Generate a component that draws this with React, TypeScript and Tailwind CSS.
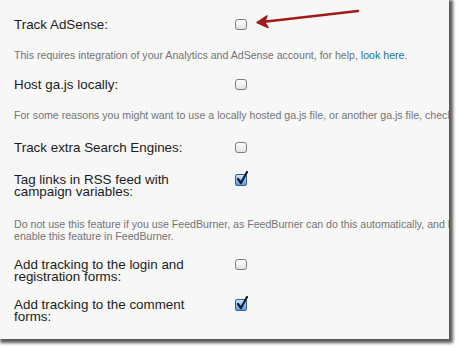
import React from "react";

function Box({ checked }: { checked?: boolean }) {
  if (checked) {
    return (
      <div className="relative w-[12px] h-[12px]">
        <div className="w-[12px] h-[12px] rounded-[2px] border border-[#3b5f8c] bg-gradient-to-b from-[#cfe4fa] to-[#5c9be0]" />
        <svg className="absolute left-[1px] top-[-3px]" width="13" height="14" viewBox="0 0 13 14">
          <path d="M2 8 L5 12 L11 1" fill="none" stroke="#0d1e3c" strokeWidth="2.2" strokeLinecap="round" strokeLinejoin="round" />
        </svg>
      </div>
    );
  }
  return <div className="w-[12px] h-[11px] rounded-[3px] border border-[#7d7d7d] bg-gradient-to-b from-[#ffffff] to-[#e2e2e2]" />;
}

function Row({ label, checked, className }: { label: React.ReactNode; checked?: boolean; className: string }) {
  return (
    <div className={"flex " + className}>
      <div className="w-[221px] text-[13.4px] leading-[12px] text-[#1c1c1c]">{label}</div>
      <div>
        <Box checked={checked} />
      </div>
    </div>
  );
}

export default function App() {
  return (
    <div className="w-[458px] h-[348px] bg-white" style={{ fontFamily: '"Liberation Sans", Arial, sans-serif' }}>
      <div className="relative w-[449px] h-[339px] bg-[#f7f7f7] overflow-hidden shadow-[2px_2px_3px_2px_rgba(0,0,0,0.65)] pl-[14px] pt-[19px]">
        <Row label="Track AdSense:" className="" />
        <div className="mt-[18px] text-[10.6px] leading-[12px] text-[#747474] whitespace-nowrap">
          This requires integration of your Analytics and AdSense account, for help, <span className="text-[#21759b]">look here</span>.
        </div>
        <Row label="Host ga.js locally:" className="mt-[18px]" />
        <div className="mt-[18px] text-[10.6px] leading-[12px] text-[#747474] whitespace-nowrap">
          For some reasons you might want to use a locally hosted ga.js file, or another ga.js file, check the help page for more info.
        </div>
        <Row label="Track extra Search Engines:" className="mt-[21px]" />
        <Row label={<>Tag links in RSS feed with<br />campaign variables:</>} checked className="mt-[20px]" />
        <div className="mt-[20px] text-[10.6px] leading-[12px] text-[#747474] whitespace-nowrap">
          <div>Do not use this feature if you use FeedBurner, as FeedBurner can do this automatically, and better than this plugin can. Check this help page for info on how to</div>
          <div>enable this feature in FeedBurner.</div>
        </div>
        <Row label={<>Add tracking to the login and<br />registration forms:</>} className="mt-[17px]" />
        <Row label={<>Add tracking to the comment<br />forms:</>} checked className="mt-[16px]" />
        <svg className="absolute left-[250px] top-[4px]" width="115" height="26" viewBox="0 0 115 26">
          <path d="M108 7 L12 18" fill="none" stroke="#a11a1a" strokeWidth="2.6" strokeLinecap="round" />
          <path d="M7 18.6 L17 12 L14.5 18.2 L18 23.5 Z" fill="#a11a1a" stroke="#a11a1a" strokeWidth="1.5" strokeLinejoin="round" />
        </svg>
      </div>
    </div>
  );
}
